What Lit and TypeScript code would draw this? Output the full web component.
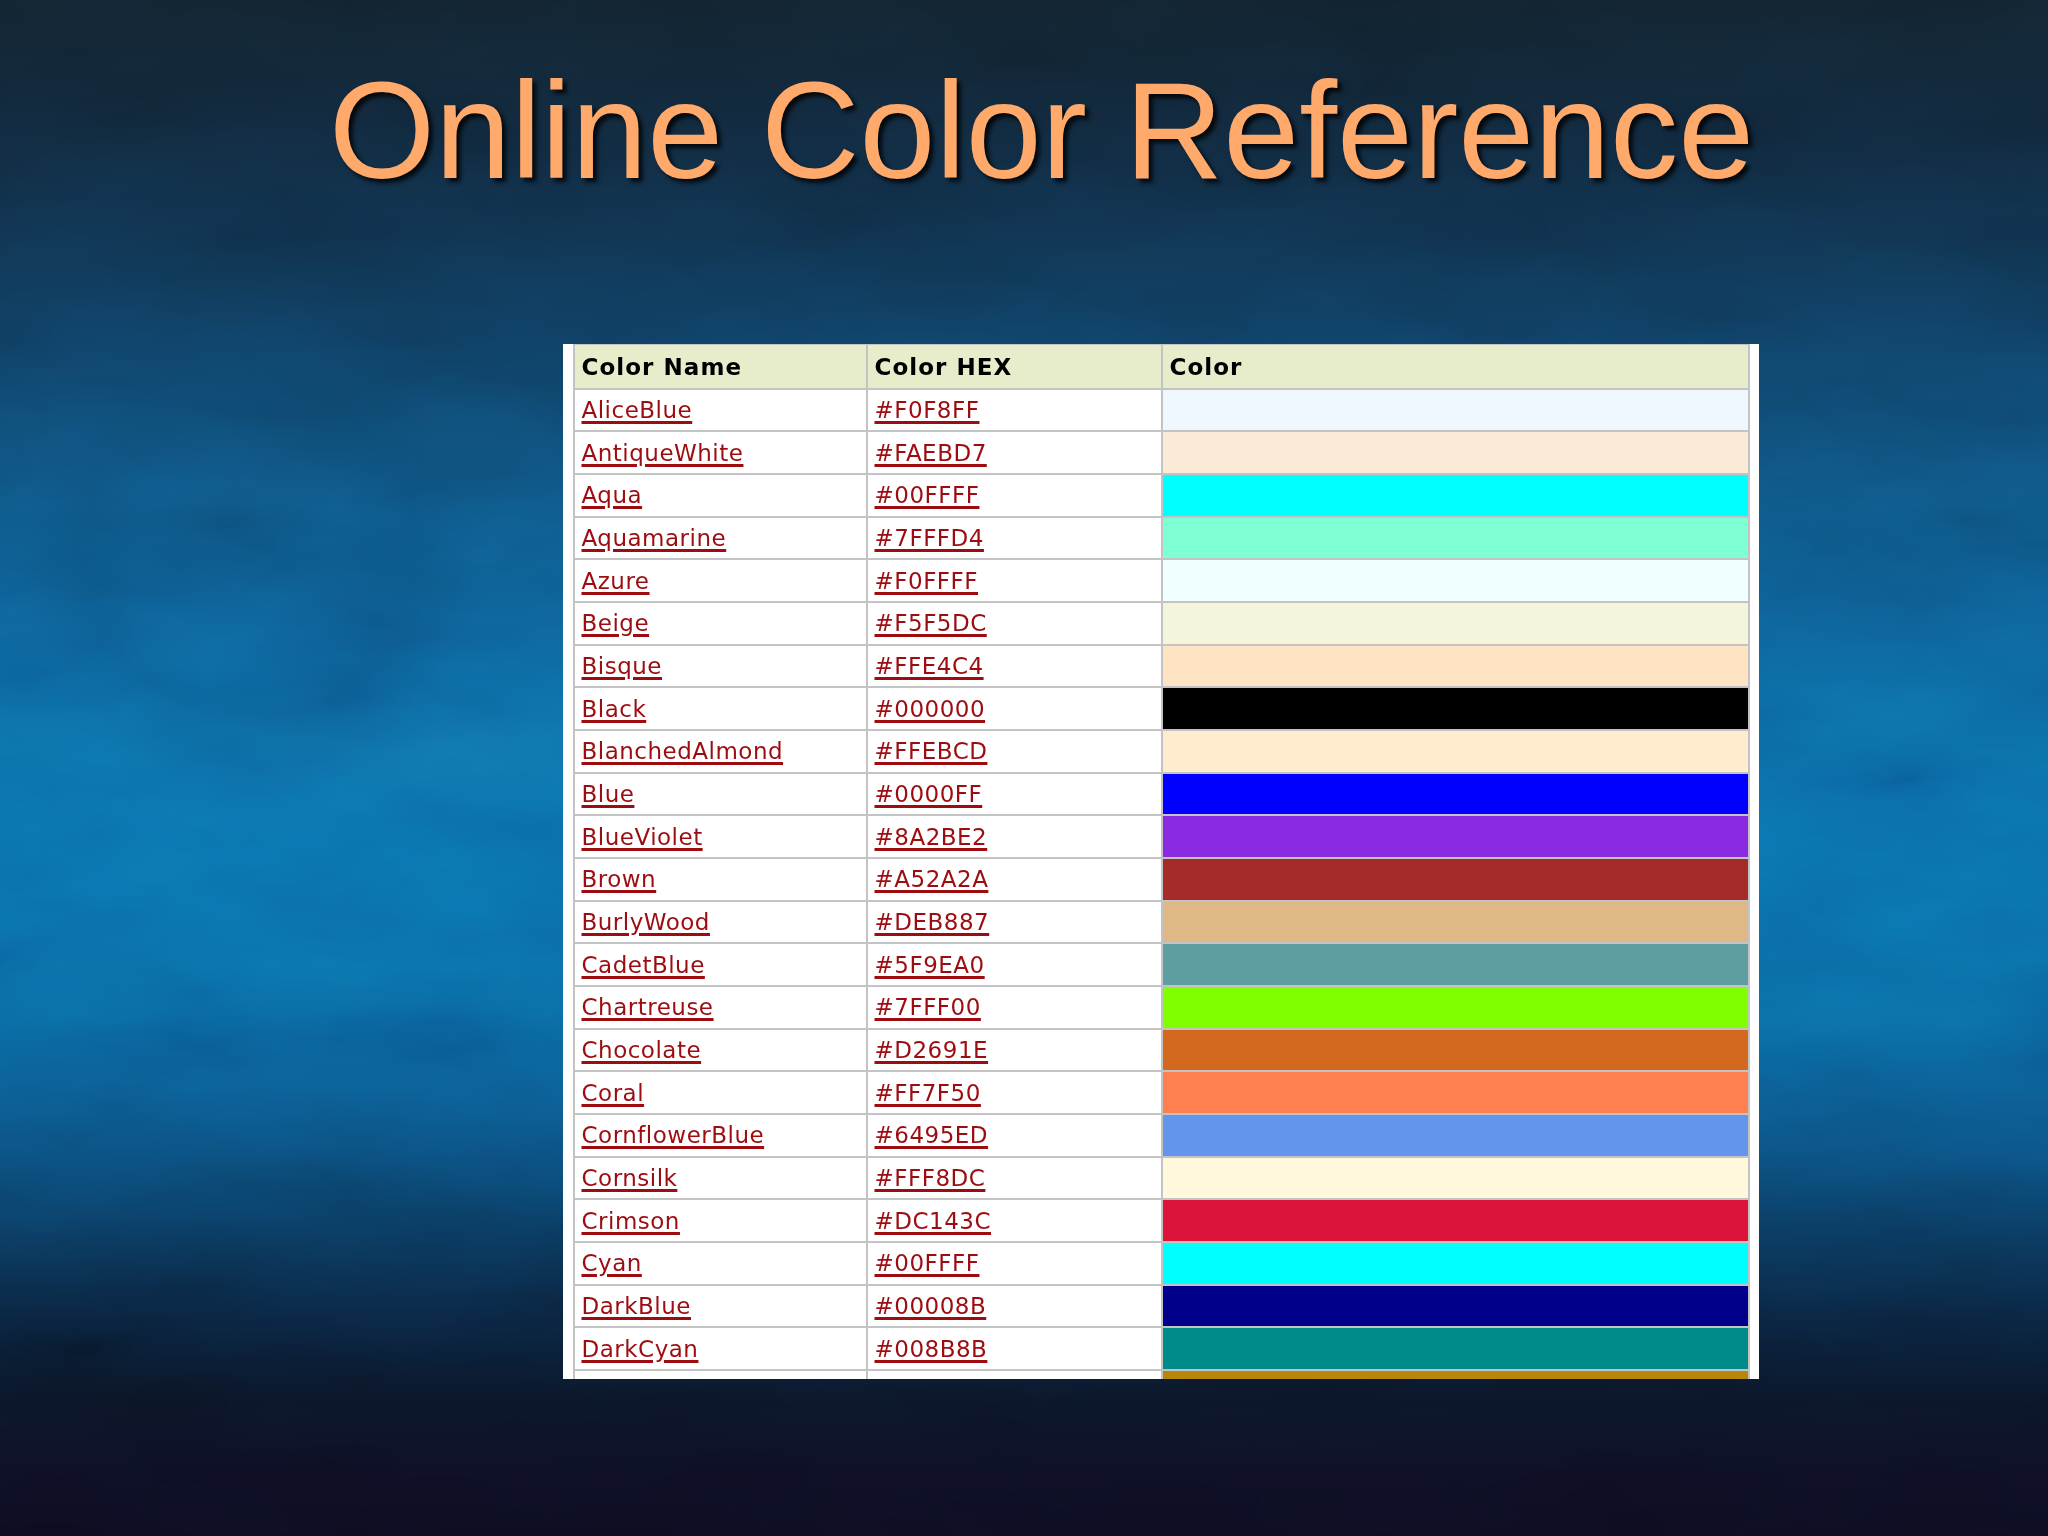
import { LitElement, html, css } from 'lit';
import { customElement } from 'lit/decorators.js';

// name, hex
const COLORS: [string, string][] = [
  ['AliceBlue', '#F0F8FF'],
  ['AntiqueWhite', '#FAEBD7'],
  ['Aqua', '#00FFFF'],
  ['Aquamarine', '#7FFFD4'],
  ['Azure', '#F0FFFF'],
  ['Beige', '#F5F5DC'],
  ['Bisque', '#FFE4C4'],
  ['Black', '#000000'],
  ['BlanchedAlmond', '#FFEBCD'],
  ['Blue', '#0000FF'],
  ['BlueViolet', '#8A2BE2'],
  ['Brown', '#A52A2A'],
  ['BurlyWood', '#DEB887'],
  ['CadetBlue', '#5F9EA0'],
  ['Chartreuse', '#7FFF00'],
  ['Chocolate', '#D2691E'],
  ['Coral', '#FF7F50'],
  ['CornflowerBlue', '#6495ED'],
  ['Cornsilk', '#FFF8DC'],
  ['Crimson', '#DC143C'],
  ['Cyan', '#00FFFF'],
  ['DarkBlue', '#00008B'],
  ['DarkCyan', '#008B8B'],
];

@customElement('app-root')
export class AppRoot extends LitElement {
  static styles = css`
    :host {
      display: block;
      position: relative;
      isolation: isolate;
      width: 2048px;
      height: 1536px;
      overflow: hidden;
      background:
        radial-gradient(circle at 250px 550px, transparent 100px, rgba(6, 60, 95, 0.14) 165px, transparent 230px),
        radial-gradient(ellipse 300px 70px at 420px 750px, rgba(30, 140, 190, 0.2), transparent 100%),
        linear-gradient(
          180deg,
          #12232f 0%,
          #11283c 8%,
          #10324e 15%,
          #0f3f63 22%,
          #0e5583 32%,
          #0d639b 42%,
          #0b6fab 52%,
          #0a6fab 60%,
          #0a69a3 66%,
          #0b5d93 71%,
          #0b4c7a 76%,
          #0a3659 81%,
          #0a2440 86%,
          #0b1629 91%,
          #0e0f25 96%,
          #0d0d22 100%
        );
    }
    /* mottled texture of the slide background */
    .texture {
      position: absolute;
      inset: 0;
      z-index: -1;
      width: 100%;
      height: 100%;
      mix-blend-mode: overlay;
      opacity: 0.14;
    }
    .title {
      margin: 0;
      padding: 53px 0 0 35px;
      height: 344px;
      box-sizing: border-box;
      text-align: center;
      font: 400 136.4px/1.15 'Liberation Sans', Arial, sans-serif;
      color: #ffa96b;
      text-shadow: 4px 4px 4px rgba(0, 0, 0, 0.8);
    }
    .panel {
      margin-left: 563px;
      width: 1196px;
      height: 1035px;
      box-sizing: border-box;
      padding: 0 9px 0 10px;
      background: #fff;
      overflow: hidden;
    }
    .sheet {
      display: grid;
      grid-template-columns: 293px 295px 1fr;
      grid-template-rows: 45.5px;
      grid-auto-rows: 42.68px;
      border-left: 2px solid #c3c3c3;
      font: 400 23px 'DejaVu Sans', Verdana, sans-serif;
      letter-spacing: 0.5px;
    }
    .cell {
      display: flex;
      align-items: center;
      box-sizing: border-box;
      padding-left: 6.5px;
      border-right: 2px solid #c3c3c3;
      border-bottom: 2px solid #c3c3c3;
    }
    .head {
      background: #e7edcb;
      color: #000;
      font-weight: 700;
      letter-spacing: 1.05px;
      padding-top: 1px;
      border-top: 1px solid #c3c3c3;
    }
    .head span,
    a {
      filter: blur(0.35px);
    }
    a {
      color: #9c0c10;
      text-decoration: underline 2.5px;
      text-underline-offset: 3px;
    }
  `;

  render() {
    return html`
      <svg class="texture" aria-hidden="true">
        <filter id="mottle">
          <feTurbulence type="fractalNoise" baseFrequency="0.004 0.01" numOctaves="4" seed="7" />
          <feColorMatrix
            values="1.3 0 0 0 -0.15
                    1.3 0 0 0 -0.15
                    1.3 0 0 0 -0.15
                    0 0 0 0 1"
          />
        </filter>
        <rect width="100%" height="100%" filter="url(#mottle)" />
      </svg>
      <h1 class="title">Online Color Reference</h1>
      <div class="panel">
        <div class="sheet">
          <div class="cell head"><span>Color Name</span></div>
          <div class="cell head"><span>Color HEX</span></div>
          <div class="cell head"><span>Color</span></div>
          ${COLORS.map(
            ([name, hex]) => html`
              <div class="cell"><a href="#">${name}</a></div>
              <div class="cell"><a href="#">${hex}</a></div>
              <div class="cell" style="background:${hex}"></div>
            `
          )}
          <!-- next row is cut by the panel edge, only its swatch shows -->
          <div class="cell"></div>
          <div class="cell"></div>
          <div class="cell" style="background:#B8860B"></div>
        </div>
      </div>
    `;
  }
}
